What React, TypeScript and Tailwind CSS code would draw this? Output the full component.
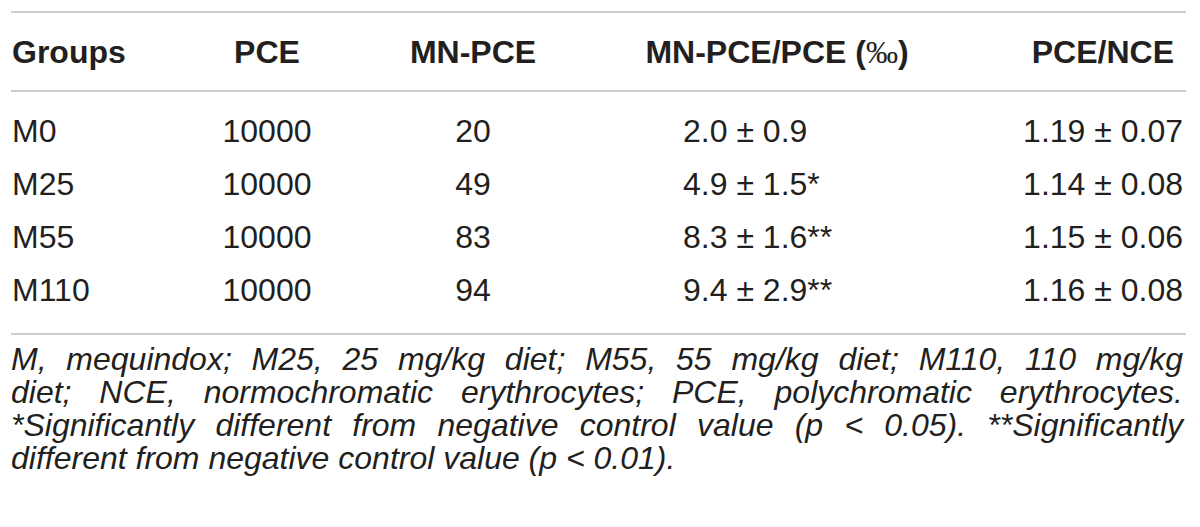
import React from "react";

const rows = [
  { g: "M0", pce: "10000", mn: "20", ratio: "2.0 ± 0.9", star: "", nce: "1.19 ± 0.07" },
  { g: "M25", pce: "10000", mn: "49", ratio: "4.9 ± 1.5", star: "*", nce: "1.14 ± 0.08" },
  { g: "M55", pce: "10000", mn: "83", ratio: "8.3 ± 1.6", star: "**", nce: "1.15 ± 0.06" },
  { g: "M110", pce: "10000", mn: "94", ratio: "9.4 ± 2.9", star: "**", nce: "1.16 ± 0.08" },
];

const cols = "grid grid-cols-[159px_194px_218px_390px_214px]";

const noteLines = [
  "M, mequindox; M25, 25 mg/kg diet; M55, 55 mg/kg diet; M110, 110 mg/kg",
  "diet; NCE, normochromatic erythrocytes; PCE, polychromatic erythrocytes.",
  "*Significantly different from negative control value (p < 0.05). **Significantly",
];

export default function App() {
  return (
    <div
      className="w-[1200px] h-[527px] bg-white text-[#231f20] overflow-hidden"
      style={{ fontFamily: '"Liberation Sans", Arial, Helvetica, sans-serif' }}
    >
      <div className="ml-[11px] w-[1175px] pt-[11px]">
        <div className="border-t-2 border-[#cdcdcd]">
          <div className={`${cols} h-[79px] items-center text-[32px] font-bold border-b-2 border-[#cdcdcd]`}>
            <div className="pl-px">Groups</div>
            <div className="text-center">PCE</div>
            <div className="text-center">MN-PCE</div>
            <div className="text-center">
              MN-PCE/PCE (
              <span className="font-normal" style={{ fontFamily: '"Liberation Serif", serif' }}>
                ‰
              </span>
              )
            </div>
            <div className="text-right pr-[12px]">PCE/NCE</div>
          </div>
          <div className="pt-[13px] pb-[16px] border-b-2 border-[#cdcdcd]">
            {rows.map((r) => (
              <div key={r.g} className={`${cols} h-[53px] leading-[53px] text-[32px]`}>
                <div className="pl-px">{r.g}</div>
                <div className="text-center">{r.pce}</div>
                <div className="text-center">{r.mn}</div>
                <div className="pl-[101px]">
                  {r.ratio}
                  {r.star}
                </div>
                <div className="text-right pr-[3px]">{r.nce}</div>
              </div>
            ))}
          </div>
        </div>
        <p className="mt-[8px] text-[32px] leading-[33px] italic pr-[3px]">
          {noteLines.map((l) => (
            <span key={l} className="block text-justify [text-align-last:justify] whitespace-nowrap">
              {l}
            </span>
          ))}
          <span className="block">different from negative control value (p &lt; 0.01).</span>
        </p>
      </div>
    </div>
  );
}
